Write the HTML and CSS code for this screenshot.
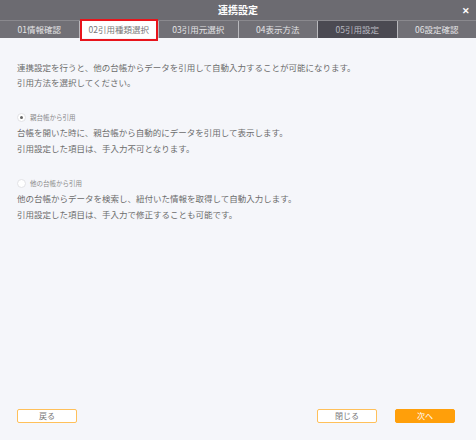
FILE: index.html
```html
<!DOCTYPE html>
<html lang="ja">
<head>
<meta charset="utf-8">
<link rel="stylesheet" href="styles.css">
</head>
<body>
<div class="dialog">
  <div class="titlebar">
    <span></span>
    <span class="title">連携設定</span>
    <span class="close">✕</span>
  </div>
  <div class="tabs">
    <div class="tab">01情報確認</div>
    <div class="tab active">02引用種類選択</div>
    <div class="tab">03引用元選択</div>
    <div class="tab">04表示方法</div>
    <div class="tab current">05引用設定</div>
    <div class="tab">06設定確認</div>
  </div>
  <div class="content">
    <p class="intro">連携設定を行うと、他の台帳からデータを引用して自動入力することが可能になります。<br>引用方法を選択してください。</p>
    <div class="option">
      <div class="radio-row"><span class="radio checked"></span><span class="radio-label">親台帳から引用</span></div>
      <p class="desc">台帳を開いた時に、親台帳から自動的にデータを引用して表示します。<br>引用設定した項目は、手入力不可となります。</p>
    </div>
    <div class="option">
      <div class="radio-row"><span class="radio"></span><span class="radio-label">他の台帳から引用</span></div>
      <p class="desc">他の台帳からデータを検索し、紐付いた情報を取得して自動入力します。<br>引用設定した項目は、手入力で修正することも可能です。</p>
    </div>
  </div>
  <div class="footer">
    <button class="btn">戻る</button>
    <span class="spacer"></span>
    <button class="btn">閉じる</button>
    <button class="btn primary">次へ</button>
  </div>
</div>
</body>
</html>
```
FILE: styles.css
```css
* { box-sizing: border-box; }
body {
  margin: 0;
  font-family: "Noto Sans CJK JP", "Noto Sans", sans-serif;
}
.dialog {
  width: 476px;
  height: 440px;
  background: #f5f6fa;
  display: flex;
  flex-direction: column;
}
.titlebar {
  height: 20px;
  background: #6c6b71;
  display: grid;
  grid-template-columns: 1fr auto 1fr;
  align-items: center;
  color: #fff;
}
.title {
  font-size: 10px;
  font-weight: bold;
  line-height: 20px;
}
.close {
  justify-self: end;
  font-size: 9px;
  font-weight: bold;
  padding-right: 6px;
}
.tabs {
  height: 18px;
  display: flex;
  background: #717076;
  border-top: 1px solid #8a898e;
}
.tab {
  flex: 1;
  font-size: 8.5px;
  color: #e4e4e6;
  text-align: center;
  line-height: 17px;
  border-left: 1px solid #b9b9bd;
  position: relative;
}
.tab:first-child { border-left: none; }
.tab.active {
  background: #fff;
  color: #777;
}
.tab.active::after {
  content: "";
  position: absolute;
  left: 0;
  right: 0;
  top: -2px;
  bottom: -3px;
  border: 2px solid #e8141b;
}
.tab.current {
  background: #4b4a52;
  color: #b9b9c0;
}
.content {
  flex: 1;
  padding: 22px 17px 0;
  color: #6c6c6c;
}
.intro {
  margin: 0 0 20px;
  font-size: 8.5px;
  line-height: 15px;
}
.option { margin-bottom: 20px; }
.radio-row {
  display: flex;
  align-items: center;
  gap: 4px;
  height: 14px;
}
.radio {
  width: 9px;
  height: 9px;
  border-radius: 50%;
  background: #fff;
  border: 1px solid #e2e2e6;
  position: relative;
}
.radio.checked::after {
  content: "";
  position: absolute;
  left: 2px;
  top: 2px;
  width: 3px;
  height: 3px;
  border-radius: 50%;
  background: #666;
}
.radio-label {
  font-size: 6.5px;
  color: #8a8a8a;
}
.desc {
  margin: 0;
  font-size: 8.5px;
  line-height: 16px;
}
.footer {
  display: flex;
  gap: 18px;
  padding: 0 21px 17px 17px;
}
.spacer { flex: 1; }
.btn {
  width: 60px;
  height: 14px;
  padding: 0;
  font-family: inherit;
  font-size: 8px;
  color: #777;
  background: #fff;
  border: 1px solid #ffc05a;
  border-radius: 2px;
  line-height: 12px;
}
.btn.primary {
  background: #ff9f0a;
  border-color: #ff9f0a;
  color: #fff;
}
```
